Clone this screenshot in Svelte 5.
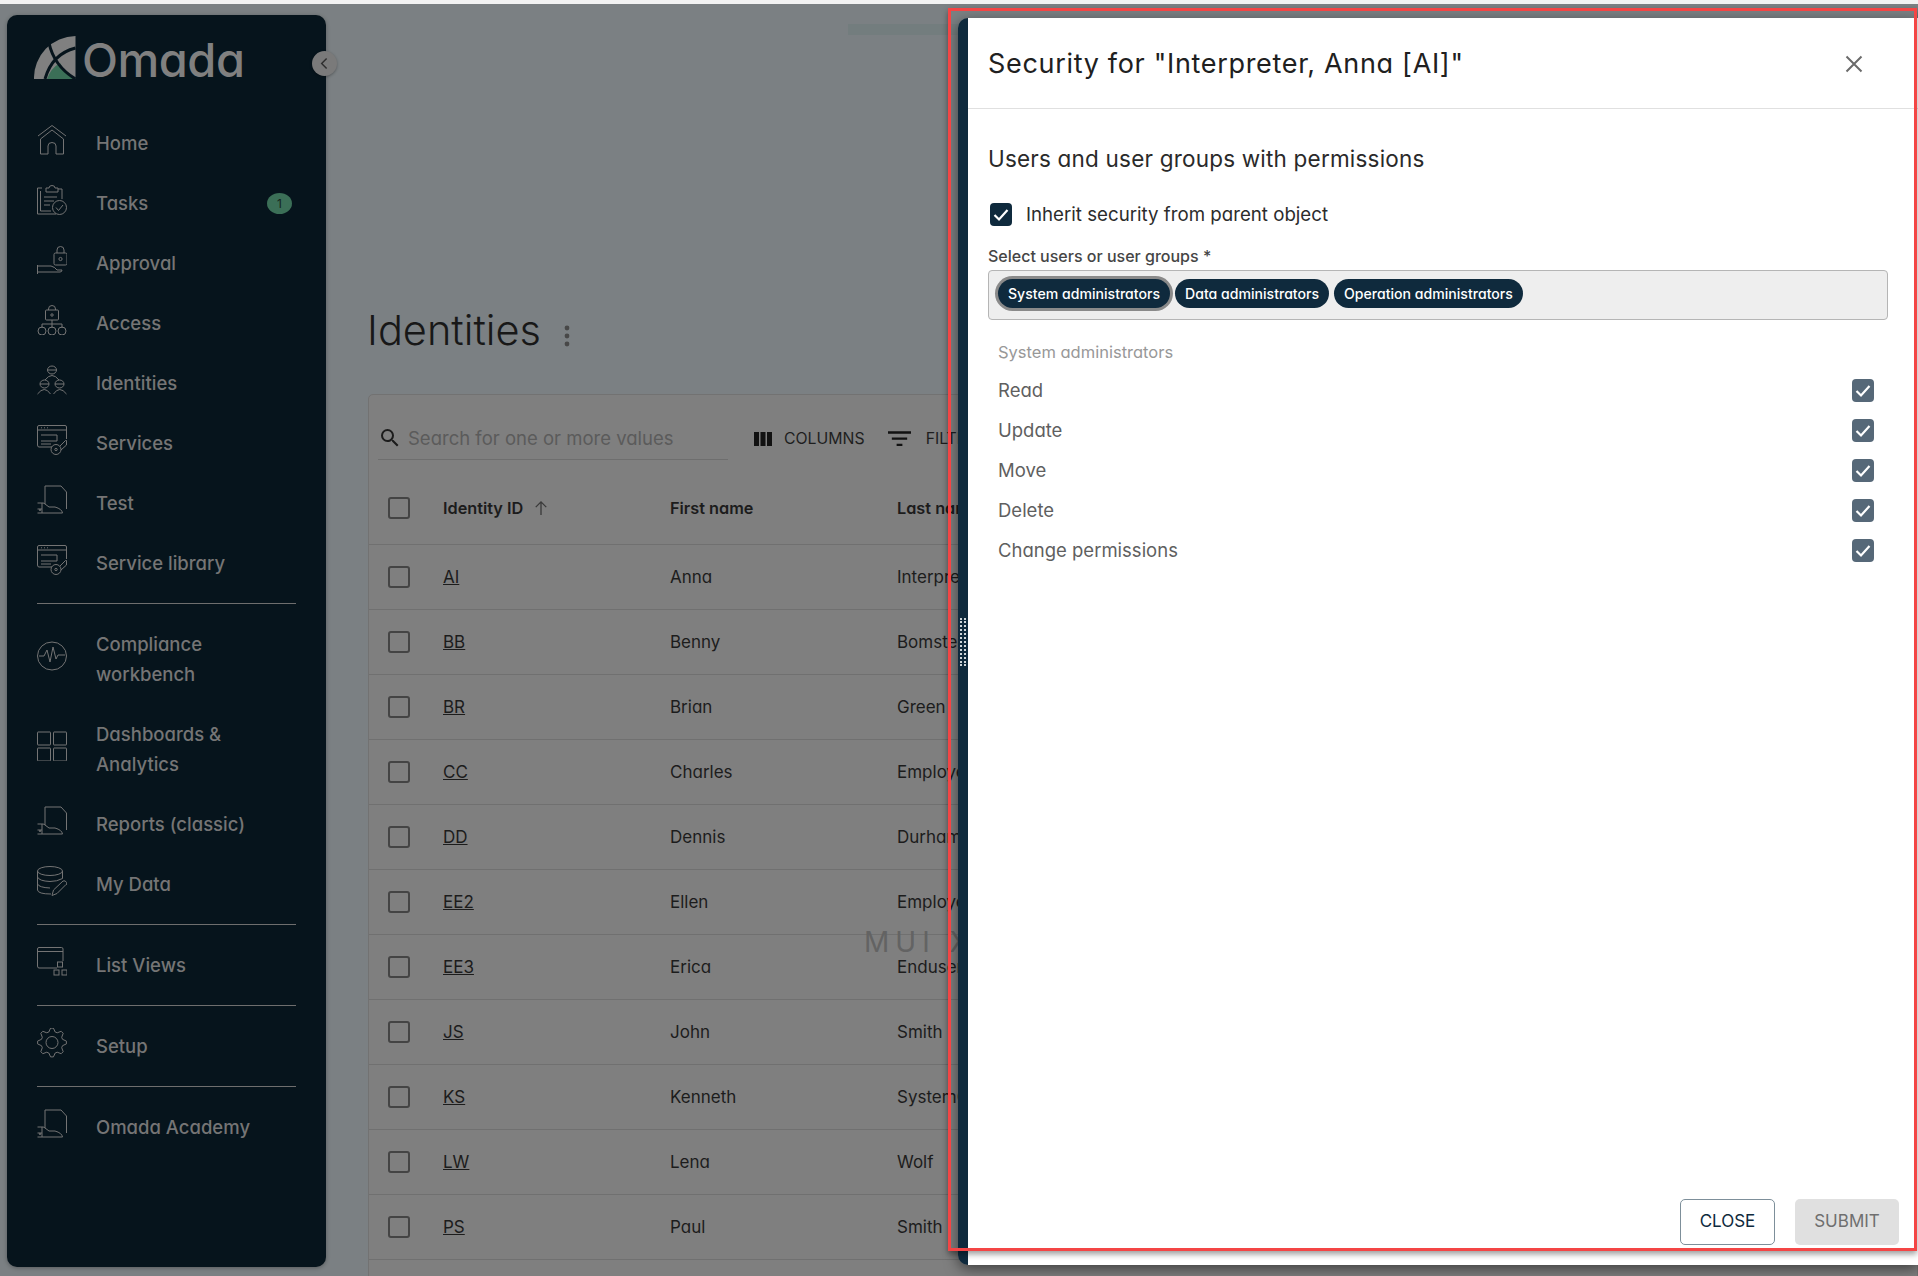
<script>
  const navGroups = [
    [
      { label: 'Home', icon: 'home' },
      { label: 'Tasks', icon: 'tasks', badge: '1' },
      { label: 'Approval', icon: 'approval' },
      { label: 'Access', icon: 'access' },
      { label: 'Identities', icon: 'identities' },
      { label: 'Services', icon: 'services' },
      { label: 'Test', icon: 'report' },
      { label: 'Service library', icon: 'services' }
    ],
    [
      { label: 'Compliance workbench', icon: 'compliance', tall: true },
      { label: 'Dashboards & Analytics', icon: 'dashboards', tall: true },
      { label: 'Reports (classic)', icon: 'report' },
      { label: 'My Data', icon: 'data' }
    ],
    [{ label: 'List Views', icon: 'list' }],
    [{ label: 'Setup', icon: 'setup' }],
    [{ label: 'Omada Academy', icon: 'report' }]
  ];
  const rows = [
    ['AI', 'Anna', 'Interpreter'],
    ['BB', 'Benny', 'Bomsted'],
    ['BR', 'Brian', 'Green'],
    ['CC', 'Charles', 'Employee'],
    ['DD', 'Dennis', 'Durham'],
    ['EE2', 'Ellen', 'Employee'],
    ['EE3', 'Erica', 'Enduser'],
    ['JS', 'John', 'Smith'],
    ['KS', 'Kenneth', 'SystemOwner'],
    ['LW', 'Lena', 'Wolf'],
    ['PS', 'Paul', 'Smith']
  ];
  const chips = ['System administrators', 'Data administrators', 'Operation administrators'];
  const perms = ['Read', 'Update', 'Move', 'Delete', 'Change permissions'];

  function gearPath() {
    let d = '';
    const n = 8;
    for (let i = 0; i < n * 4; i++) {
      const a = (i / (n * 4)) * Math.PI * 2 - Math.PI / 2 - Math.PI / (n * 4);
      const r = i % 4 < 2 ? 14.5 : 11;
      const x = (15 + r * Math.cos(a)).toFixed(1);
      const y = (14.5 + r * Math.sin(a)).toFixed(1);
      d += (i === 0 ? 'M' : 'L') + x + ' ' + y + ' ';
    }
    return d + 'Z';
  }
</script>

{#snippet icon(name)}
  <svg class="nav-icon" viewBox="0 0 30 30" aria-hidden="true">
    {#if name === 'home'}
      <path d="M1 11 15 0.5 29 11" />
      <path d="M3.5 14V29H11V21Q11 17.5 15 17.5T19 21V29H26.5V14L15 5Z" />
    {:else if name === 'tasks'}
      <path d="M5 3H0.5V29H19" />
      <path d="M3.5 6V26H14" />
      <path d="M9 3H12Q12 0.5 15 0.5T18 3H21V7H9Z" />
      <path d="M21 4H25V14" />
      <path d="M7 12H20M7 16H17M7 20H13" />
      <circle cx="22.5" cy="22.5" r="7" />
      <path d="M19 22.5 21.5 25.5 26 20" />
    {:else if name === 'approval'}
      <rect x="17" y="8" width="13" height="12" rx="1.5" />
      <path d="M20 8V5A3.5 3.5 0 0 1 27 5V8" />
      <circle cx="23.5" cy="14" r="1.6" />
      <path d="M0.5 20V29M0.5 21H14Q18 22 20 25H25Q25 27 23 27H0.5" />
    {:else if name === 'access'}
      <rect x="8.5" y="5" width="13" height="10" rx="1" />
      <path d="M11.5 5V4A3.5 3.5 0 0 1 18.5 4V5" />
      <circle cx="15" cy="10" r="1.2" />
      <path d="M15 15V19M5 23V19H25V23M15 19V23" />
      <circle cx="5" cy="26" r="4" />
      <circle cx="15" cy="26" r="4" />
      <circle cx="25" cy="26" r="4" />
    {:else if name === 'identities'}
      <ellipse cx="15" cy="5" rx="4.5" ry="4" />
      <path d="M10.5 5H19.5M8 15Q15 6 22 15" />
      <ellipse cx="7.5" cy="19" rx="4.5" ry="4" />
      <path d="M3 19H12M0.5 29Q7.5 20 13.5 29" />
      <ellipse cx="22.5" cy="19" rx="4.5" ry="4" />
      <path d="M18 19H27M16.5 29Q22.5 20 29.5 29" />
    {:else if name === 'services'}
      <path d="M15 22H2Q0.5 22 0.5 20V2Q0.5 0.5 2 0.5H28Q29.5 0.5 29.5 2V14" />
      <path d="M0.5 5H29.5" />
      <path d="M4 2.8H5M7 2.8H8M10 2.8H11" />
      <path d="M4 10H20V16H4" />
      <path d="M4 19H14" />
      <circle cx="19" cy="24.5" r="5" />
      <circle cx="19" cy="24.5" r="1.2" />
      <path d="M23 21 28.5 15.5H29.5V20L24 25" />
    {:else if name === 'report'}
      <path d="M8 19V1H24L29.5 7V24" />
      <path d="M0.5 18H6Q7 18 8 19L12 22H18Q25 24 25.5 28H0.5" />
      <path d="M0.5 24H5M5 18V28" />
      <circle cx="3" cy="25" r="0.7" />
    {:else if name === 'compliance'}
      <ellipse cx="15" cy="15" rx="14.5" ry="14" />
      <path d="M2 15H7L10 9 13 21 16 6 19 18 21 14H28" />
    {:else if name === 'dashboards'}
      <rect x="0.5" y="1" width="13" height="13" rx="0.5" />
      <rect x="16.5" y="1" width="13" height="13" rx="0.5" />
      <rect x="0.5" y="17" width="13" height="13" rx="0.5" />
      <rect x="16.5" y="17" width="13" height="13" rx="0.5" />
    {:else if name === 'data'}
      <ellipse cx="13" cy="5" rx="12.5" ry="4.5" />
      <path d="M0.5 5V24Q1 28 14 28M0.5 11Q2 15 13 15.5 20 15.5 25.5 12.5V5M0.5 18Q2 21.5 13 22" />
      <path d="M15 29.5 16.5 24 26 15Q28.5 14 29.5 16.5T29 18.5L20 27.5Z" />
    {:else if name === 'list'}
      <path d="M20 21H2Q0.5 21 0.5 19V2Q0.5 0.5 2 0.5H24.5Q26 0.5 26 2V14" />
      <path d="M0.5 4.5H26" />
      <rect x="20.5" y="15" width="5" height="5" />
      <rect x="17" y="23" width="5" height="5" />
      <rect x="25" y="23" width="5" height="5" />
    {:else if name === 'setup'}
      <path d={gearPath()} stroke-linejoin="round" />
      <circle cx="15" cy="14.5" r="6" />
    {/if}
  </svg>
{/snippet}

{#snippet tick(extra)}
  <span class="box {extra}">
    <svg viewBox="0 0 22 22" aria-hidden="true"><path d="M4.5 11.5 9 16 17.5 6.5" /></svg>
  </span>
{/snippet}

<div class="screen">
  <div class="shell">
    <aside class="sidebar">
      <div class="logo">
        <svg class="emblem" viewBox="0 0 42 43" aria-hidden="true">
          <path class="fan" d="M0 43A42 42 0 0 1 41.5 0V43Z" />
          <path class="wedge" d="M13 43Q17 32 26 27 31 37 41 43Z" />
          <path class="cut" d="M15 7Q20 30 41.5 43M41.5 12Q18 18 11 43" />
        </svg>
        <span class="wordmark">Omada</span>
        <button class="collapse" aria-label="Collapse menu">
          <svg viewBox="0 0 24 24" aria-hidden="true"><path d="M15 5 8 12 15 19" /></svg>
        </button>
      </div>
      {#each navGroups as group, g}
        {#if g > 0}<hr class="nav-rule" />{/if}
        <nav class="nav-group">
          {#each group as item}
            <div class="nav-item" class:tall={item.tall}>
              {@render icon(item.icon)}
              <span class="nav-label">{item.label}</span>
              {#if item.badge}<span class="badge">{item.badge}</span>{/if}
            </div>
          {/each}
        </nav>
      {/each}
    </aside>

    <main class="main">
      <div class="progress"></div>
      <div class="title-row">
        <h1>Identities</h1>
        <svg class="kebab" viewBox="0 0 6 22" aria-hidden="true">
          <circle cx="3" cy="3" r="2.4" /><circle cx="3" cy="11" r="2.4" /><circle cx="3" cy="19" r="2.4" />
        </svg>
      </div>
      <section class="card">
        <div class="toolbar">
          <div class="search">
            <svg viewBox="0 0 24 24" aria-hidden="true"><path d="M15.5 14h-.79l-.28-.27A6.47 6.47 0 0 0 16 9.5 6.5 6.5 0 1 0 9.5 16c1.61 0 3.09-.59 4.23-1.57l.27.28v.79l5 4.99L20.49 19zm-6 0C7.01 14 5 11.99 5 9.5S7.01 5 9.5 5 14 7.01 14 9.5 11.99 14 9.5 14" /></svg>
            <span>Search for one or more values</span>
          </div>
          <div class="tool">
            <svg viewBox="0 0 18 14" aria-hidden="true"><path d="M0 0h5v14H0zM6.5 0h5v14h-5zM13 0h5v14h-5z" /></svg>
            <span>COLUMNS</span>
          </div>
          <div class="tool filter">
            <svg viewBox="0 0 24 16" aria-hidden="true"><path d="M0 0h24v2.4H0zM4 6.5h16v2.4H4zM9 13h6v2.4H9z" /></svg>
            <span>FILTERS</span>
          </div>
        </div>
        <div class="row head">
          <span class="cb"></span>
          <span class="sorted">Identity ID
            <svg viewBox="0 0 16 18" aria-hidden="true"><path d="M8 17V2M2 8 8 2 14 8" /></svg>
          </span>
          <span>First name</span>
          <span>Last name</span>
        </div>
        {#each rows as r}
          <div class="row">
            <span class="cb"></span>
            <a href="#top" class="id">{r[0]}</a>
            <span>{r[1]}</span>
            <span>{r[2]}</span>
          </div>
        {/each}
        <div class="row"></div>
        <div class="watermark">MUI X</div>
      </section>
    </main>
  </div>

  <div class="dialog" role="dialog" aria-label="Security">
    <div class="strip"><span class="grip"></span></div>
    <div class="panel">
      <header class="dlg-head">
        <h2>Security for "Interpreter, Anna [AI]"</h2>
        <svg class="close-x" viewBox="0 0 18 18" aria-hidden="true"><path d="M1.5 1.5 16.5 16.5M16.5 1.5 1.5 16.5" /></svg>
      </header>
      <div class="dlg-body">
        <h3>Users and user groups with permissions</h3>
        <label class="inherit">
          {@render tick('dark')}
          <span>Inherit security from parent object</span>
        </label>
        <div class="field-label">Select users or user groups *</div>
        <div class="chips">
          {#each chips as c, i}
            <span class="chip" class:focus={i === 0}>{c}</span>
          {/each}
        </div>
        <div class="group-name">System administrators</div>
        {#each perms as p}
          <div class="perm">
            <span>{p}</span>
            {@render tick('muted')}
          </div>
        {/each}
      </div>
      <footer class="dlg-foot">
        <button class="btn close">CLOSE</button>
        <button class="btn submit">SUBMIT</button>
      </footer>
    </div>
  </div>
  <div class="marker"></div>
</div>

<style>
  :global(body) {
    margin: 0;
    background: #7b8083;
  }
  .screen {
    position: relative;
    display: flex;
    flex-direction: column;
    height: 1276px;
    overflow: hidden;
    padding-top: 4px;
    box-sizing: border-box;
    background: #f2f2f2;
    font-family: Inter, "Noto Sans", sans-serif;
    font-feature-settings: "cv11" 1;
  }
  .shell {
    flex: 1;
    display: flex;
    min-height: 0;
    background: #7b8083;
  }
  .sidebar {
    flex: 0 0 319px;
    box-sizing: border-box;
    margin: 11px 0 9px 7px;
    padding: 0 30px;
    background: #06141c;
    border-radius: 10px;
    box-shadow: 0 1px 4px rgba(0, 0, 0, 0.3);
    color: #767676;
  }
  .logo {
    position: relative;
    display: flex;
    align-items: center;
    gap: 6px;
    height: 98px;
    margin-left: -3px;
    padding-bottom: 12px;
    box-sizing: border-box;
  }
  .emblem {
    width: 42px;
    height: 43px;
    margin-top: -2px;
  }
  .fan { fill: #808080; }
  .wedge { fill: #3b6f57; }
  .cut { fill: none; stroke: #06141c; stroke-width: 3; }
  .wordmark {
    font-size: 47px;
    line-height: 1;
    letter-spacing: -0.5px;
    color: #808080;
    font-weight: 500;
    margin-top: 2px;
  }
  .collapse {
    position: absolute;
    right: -41px;
    top: 36px;
    width: 25px;
    height: 25px;
    padding: 4px;
    border: 0;
    border-radius: 50%;
    background: #7a7a7a;
    box-shadow: 0 1px 3px rgba(0, 0, 0, 0.3);
  }
  .collapse svg {
    display: block;
    fill: none;
    stroke: #2e2e2e;
    stroke-width: 2;
  }
  .nav-group { display: flex; flex-direction: column; }
  .nav-item {
    display: flex;
    align-items: center;
    gap: 29px;
    height: 60px;
  }
  .nav-item.tall { height: 90px; }
  .nav-icon {
    flex: 0 0 30px;
    width: 30px;
    height: 30px;
    margin-top: -6px;
    fill: none;
    stroke: #747474;
    stroke-width: 1;
  }
  .nav-label {
    font-size: 18.5px;
    line-height: 30px;
    font-weight: 500;
    color: #757575;
    max-width: 170px;
  }
  .badge {
    margin-left: auto;
    margin-right: 4px;
    width: 25px;
    height: 21px;
    border-radius: 50%;
    background: #3b6f57;
    color: #14241d;
    font-size: 12px;
    line-height: 21px;
    text-align: center;
  }
  .nav-rule {
    margin: 10px 0;
    border: 0;
    border-top: 1px solid #6e6e6e;
  }

  .main {
    flex: 1;
    min-width: 0;
    padding-left: 42px;
    overflow: hidden;
  }
  .progress {
    width: 110px;
    height: 11px;
    margin: 20px 0 0 480px;
    background: #737d7e;
  }
  .title-row {
    display: flex;
    align-items: center;
    gap: 23px;
    height: 50px;
    margin-top: 270px;
  }
  h1 {
    margin: 0 0 0 -1px;
    font-size: 41.5px;
    font-weight: 300;
    color: #181818;
  }
  .kebab {
    width: 6px;
    height: 22px;
    margin-top: 11px;
    fill: #484848;
  }
  .card {
    position: relative;
    margin-top: 39px;
    background: #7f7f7f;
    border: 1px solid #727272;
    border-radius: 5px 0 0 0;
  }
  .toolbar {
    display: flex;
    align-items: flex-start;
    height: 80px;
    box-sizing: border-box;
    padding: 22px 0 0 9px;
  }
  .search {
    display: flex;
    align-items: center;
    gap: 6px;
    width: 350px;
    height: 43px;
    box-sizing: border-box;
    border-bottom: 1px solid #6e6e6e;
    color: #5b5b5b;
    font-size: 18.5px;
  }
  .search svg {
    width: 24px;
    height: 24px;
    fill: #1c1c1c;
  }
  .tool {
    display: flex;
    align-items: center;
    gap: 12px;
    height: 43px;
    margin-left: 26px;
    color: #1e1e1e;
    font-size: 15.8px;
    white-space: nowrap;
  }
  .tool svg {
    width: 18px;
    height: 14px;
    fill: #121212;
  }
  .tool.filter { margin-left: 23px; gap: 15px; }
  .tool.filter svg { width: 23px; height: 16px; }
  .row {
    display: grid;
    grid-template-columns: 74px 227px 227px 1fr;
    align-items: center;
    height: 65px;
    box-sizing: border-box;
    border-bottom: 1px solid #707070;
    font-size: 17px;
    color: #1c1c1c;
    white-space: nowrap;
  }
  .row.head {
    height: 70px;
    font-weight: 600;
    font-size: 16.3px;
    padding-bottom: 3px;
  }
  .cb {
    width: 22px;
    height: 22px;
    margin-left: 19px;
    box-sizing: border-box;
    border: 2px solid #444;
    border-radius: 3px;
  }
  .sorted {
    display: flex;
    align-items: center;
    gap: 11px;
  }
  .sorted svg {
    width: 14px;
    height: 16px;
    fill: none;
    stroke: #3a3a3a;
    stroke-width: 1.5;
  }
  .id { color: #1c1c1c; text-decoration: underline; }
  .watermark {
    position: absolute;
    left: 495px;
    top: 530px;
    color: #636363;
    font-size: 28px;
    letter-spacing: 6px;
    white-space: nowrap;
  }

  .dialog {
    position: absolute;
    left: 958px;
    top: 18px;
    right: 0;
    height: 1247px;
    display: flex;
    box-shadow: 0 4px 14px rgba(0, 0, 0, 0.5);
    border-radius: 10px 0 0 10px;
  }
  .strip {
    flex: 0 0 10px;
    display: flex;
    align-items: center;
    justify-content: center;
    background: #0f2a3d;
    border-radius: 10px 0 0 10px;
  }
  .grip {
    width: 6px;
    height: 48px;
    border-left: 2px dotted #cfd6da;
    border-right: 2px dotted #cfd6da;
    box-sizing: border-box;
  }
  .panel {
    flex: 1;
    display: flex;
    flex-direction: column;
    min-width: 0;
    background: #fff;
  }
  .dlg-head {
    display: flex;
    align-items: center;
    justify-content: space-between;
    height: 91px;
    box-sizing: border-box;
    padding: 1px 55px 0 20px;
    border-bottom: 1px solid #e0e0e0;
  }
  h2 {
    margin: 0;
    font-size: 27px;
    letter-spacing: 0.68px;
    font-weight: 400;
    color: #202020;
  }
  .close-x {
    width: 18px;
    height: 18px;
    fill: none;
    stroke: #6b6b6b;
    stroke-width: 2;
  }
  .dlg-body {
    flex: 1;
    padding: 35px 30px 0 20px;
  }
  h3 {
    margin: 0;
    height: 30px;
    font-size: 22.5px;
    letter-spacing: 0.2px;
    line-height: 30px;
    font-weight: 400;
    color: #2a2a2a;
  }
  .inherit {
    display: flex;
    align-items: center;
    gap: 14px;
    height: 30px;
    margin-top: 25px;
    padding-left: 2px;
    font-size: 18.7px;
    color: #2c2c2c;
  }
  .box {
    flex: 0 0 22px;
    width: 22px;
    height: 23px;
    border-radius: 4px;
    display: block;
  }
  .box.dark { background: #0f2a3d; }
  .box.muted { background: #566878; }
  .box svg {
    display: block;
    width: 22px;
    height: 23px;
    fill: none;
    stroke: #fff;
    stroke-width: 2.2;
  }
  .field-label {
    height: 20px;
    margin-top: 17px;
    font-size: 16px;
    line-height: 20px;
    font-weight: 500;
    color: #454545;
  }
  .chips {
    display: flex;
    align-items: center;
    gap: 5px;
    height: 50px;
    margin-top: 4px;
    padding: 0 0 3px 9px;
    box-sizing: border-box;
    background: #eee;
    border: 1px solid #b5b5b5;
    border-radius: 4px;
  }
  .chip {
    height: 29px;
    padding: 0 10px;
    border-radius: 15px;
    background: #0f2a3d;
    color: #fff;
    font-size: 14.1px;
    font-weight: 500;
    line-height: 29px;
    white-space: nowrap;
  }
  .chip.focus { box-shadow: 0 0 0 3px #8a8a8a; }
  .group-name {
    height: 22px;
    margin: 21px 0 7px;
    padding-left: 10px;
    font-size: 16.5px;
    line-height: 22px;
    color: #989898;
  }
  .perm {
    display: flex;
    align-items: center;
    justify-content: space-between;
    height: 40px;
    padding: 0 14px 0 10px;
    font-size: 18.5px;
    color: #5f5f5f;
  }
  .dlg-foot {
    display: flex;
    justify-content: flex-end;
    gap: 20px;
    padding: 0 19px 20px 0;
  }
  .btn {
    height: 46px;
    padding-bottom: 4px;
    border-radius: 5px;
    font-family: inherit;
    font-size: 17px;
  }
  .btn.close {
    width: 95px;
    background: #fff;
    border: 1px solid #7d8f9a;
    color: #0f2a3d;
  }
  .btn.submit {
    width: 104px;
    background: #e0e0e0;
    border: 0;
    color: #6f6f6f;
  }
  .marker {
    position: absolute;
    left: 948px;
    top: 8px;
    width: 969px;
    height: 1243px;
    box-sizing: border-box;
    border: 3.5px solid #f44545;
    box-shadow: 0 3px 6px rgba(0, 0, 0, 0.4);
    pointer-events: none;
  }
</style>
